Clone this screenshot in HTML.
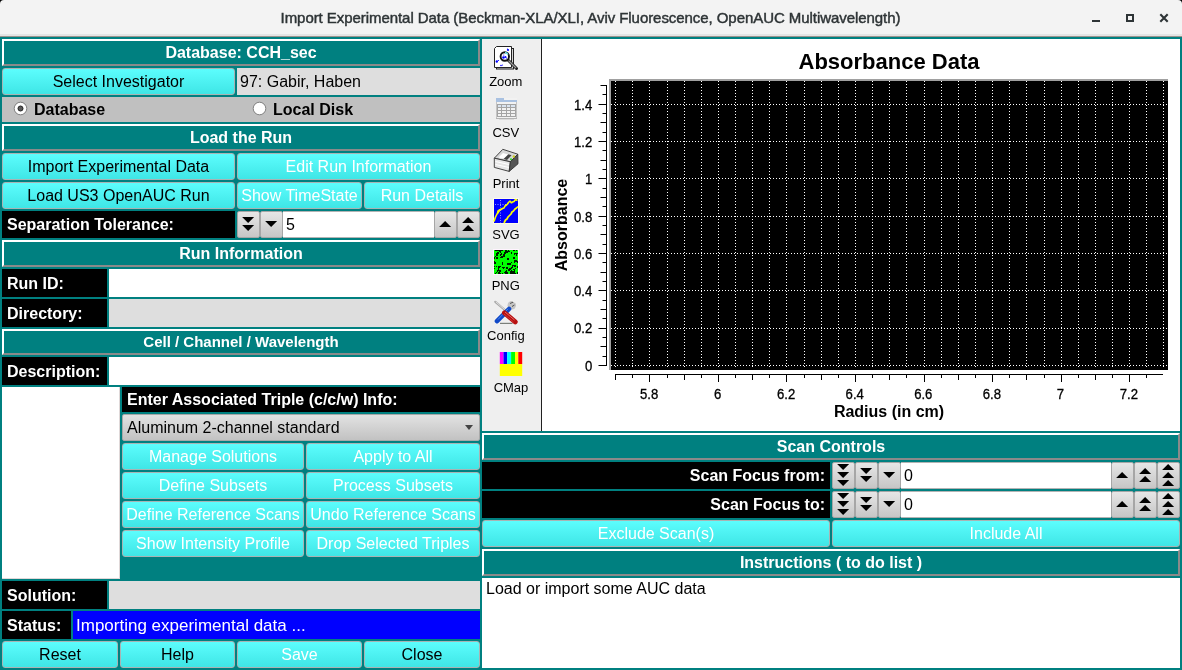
<!DOCTYPE html>
<html><head><meta charset="utf-8"><style>
html,body{margin:0;padding:0;}
svg{display:block;}
body{width:1182px;height:670px;overflow:hidden;position:relative;background:#000;font-family:"Liberation Sans",sans-serif;}
body div{position:absolute;box-sizing:border-box;}
#root{left:0;top:0;width:1182px;height:670px;will-change:transform;}
</style></head><body><div id="root">

<div style="left:0px;top:37px;width:1182px;height:633px;background:#008080;"></div>
<div style="left:0px;top:0px;width:1182px;height:37px;background:linear-gradient(#f3f3f3 0,#f3f3f3 34px,#e4e4e4 34px,#e4e4e4 36px,#9d948e 36px);border-radius:4px 4px 0 0;"></div>
<div style="left:0px;top:0px;width:1182px;height:36px;color:#2e3436;font-size:15px;line-height:35px;text-align:center;font-weight:normal;letter-spacing:-0.06px;padding-right:1px;-webkit-text-stroke:0.45px #2e3436;">Import Experimental Data (Beckman-XLA/XLI, Aviv Fluorescence, OpenAUC Multiwavelength)</div>
<div style="left:1092px;top:20px;width:8px;height:2px;background:#2e3436;"></div>
<div style="left:1126px;top:14px;width:8px;height:8px;border:2px solid #2e3436;"></div>
<div style="left:1158px;top:12px;width:12px;height:12px;"><svg width="12" height="12" viewBox="0 0 12 12" style="display:block"><path d="M2.3 2.3L9.7 9.7M9.7 2.3L2.3 9.7" stroke="#2e3436" stroke-width="2.1"/></svg></div>
<div style="left:2px;top:39px;width:478px;height:27px;background:#008080;border-top:2px solid #fff;border-left:2px solid #fff;border-bottom:2px solid #8a8a8a;border-right:2px solid #8a8a8a;color:#fff;font-weight:bold;font-size:16px;line-height:23px;text-align:center;">Database: CCH_sec</div>
<div style="left:2px;top:68px;width:233px;height:27px;background:linear-gradient(#5cfdfd,#3fe6e6);border:1px solid #a9b3b3;border-radius:3px;color:#000;font-size:16px;line-height:25px;text-align:center;white-space:nowrap;overflow:hidden;">Select Investigator</div>
<div style="left:237px;top:68px;width:243px;height:27px;background:#dedede;color:#000;font-size:16px;line-height:27px;padding-left:3px;white-space:nowrap;">97: Gabir, Haben</div>
<div style="left:2px;top:97px;width:478px;height:25px;background:#c0c0c0;"></div>
<div style="left:13.3px;top:101.3px;width:15.0px;height:15.0px;"><svg width="15" height="15" viewBox="0 0 15 15"><circle cx="7.5" cy="7.5" r="6.3" fill="#fff" stroke="#808080" stroke-width="1"/><circle cx="7.5" cy="7.5" r="2.5" fill="#5a5a5a" stroke="#222" stroke-width="1"/></svg></div>
<div style="left:252.39999999999998px;top:101.3px;width:15.0px;height:15.0px;"><svg width="15" height="15" viewBox="0 0 15 15"><circle cx="7.5" cy="7.5" r="6.3" fill="#fff" stroke="#808080" stroke-width="1"/></svg></div>
<div style="left:34px;top:97px;width:166px;height:25px;font-weight:bold;font-size:16px;line-height:25px;color:#000;">Database</div>
<div style="left:273px;top:97px;width:177px;height:25px;font-weight:bold;font-size:16px;line-height:25px;color:#000;">Local Disk</div>
<div style="left:2px;top:124px;width:478px;height:27px;background:#008080;border-top:2px solid #fff;border-left:2px solid #fff;border-bottom:2px solid #8a8a8a;border-right:2px solid #8a8a8a;color:#fff;font-weight:bold;font-size:16px;line-height:23px;text-align:center;">Load the Run</div>
<div style="left:2px;top:153px;width:233px;height:27px;background:linear-gradient(#5cfdfd,#3fe6e6);border:1px solid #a9b3b3;border-radius:3px;color:#000;font-size:16px;line-height:25px;text-align:center;white-space:nowrap;overflow:hidden;">Import Experimental Data</div>
<div style="left:237px;top:153px;width:243px;height:27px;background:linear-gradient(#5cfdfd,#3fe6e6);border:1px solid #a9b3b3;border-radius:3px;color:#fff;font-size:16px;line-height:25px;text-align:center;white-space:nowrap;overflow:hidden;">Edit Run Information</div>
<div style="left:2px;top:182px;width:233px;height:27px;background:linear-gradient(#5cfdfd,#3fe6e6);border:1px solid #a9b3b3;border-radius:3px;color:#000;font-size:16px;line-height:25px;text-align:center;white-space:nowrap;overflow:hidden;">Load US3 OpenAUC Run</div>
<div style="left:237px;top:182px;width:125px;height:27px;background:linear-gradient(#5cfdfd,#3fe6e6);border:1px solid #a9b3b3;border-radius:3px;color:#fff;font-size:16px;line-height:25px;text-align:center;white-space:nowrap;overflow:hidden;">Show TimeState</div>
<div style="left:364px;top:182px;width:116px;height:27px;background:linear-gradient(#5cfdfd,#3fe6e6);border:1px solid #a9b3b3;border-radius:3px;color:#fff;font-size:16px;line-height:25px;text-align:center;white-space:nowrap;overflow:hidden;">Run Details</div>
<div style="left:2px;top:211px;width:233px;height:27px;background:#000;color:#fff;font-weight:bold;font-size:16px;line-height:27px;white-space:nowrap;padding-left:5px;text-align:left;">Separation Tolerance:</div>
<div style="left:237px;top:211px;width:23px;height:27px;background:linear-gradient(#e6e6e6,#c6c6c6);border:1px solid #a6a6a6;border-radius:2px;"><svg width="21" height="25" style="position:absolute;left:0;top:0" viewBox="1 1 21 25"><path d="M5.1 6.0H17.1L11.1 12.0Z M5.1 14.0H17.1L11.1 20.0Z" fill="#000"/></svg></div>
<div style="left:260px;top:211px;width:23px;height:27px;background:linear-gradient(#e6e6e6,#c6c6c6);border:1px solid #a6a6a6;border-radius:2px;"><svg width="21" height="25" style="position:absolute;left:0;top:0" viewBox="1 1 21 25"><path d="M5.1 10.0H17.1L11.1 16.0Z" fill="#000"/></svg></div>
<div style="left:283px;top:211px;width:151px;height:27px;background:#fff;color:#000;font-size:16px;line-height:25px;padding-left:3px;white-space:nowrap;border-top:1px solid #b4b4b4;border-bottom:1px solid #b4b4b4;">5</div>
<div style="left:434px;top:211px;width:23px;height:27px;background:linear-gradient(#e6e6e6,#c6c6c6);border:1px solid #a6a6a6;border-radius:2px;"><svg width="21" height="25" style="position:absolute;left:0;top:0" viewBox="1 1 21 25"><path d="M5.1 16.0H17.1L11.1 10.0Z" fill="#000"/></svg></div>
<div style="left:457px;top:211px;width:23px;height:27px;background:linear-gradient(#e6e6e6,#c6c6c6);border:1px solid #a6a6a6;border-radius:2px;"><svg width="21" height="25" style="position:absolute;left:0;top:0" viewBox="1 1 21 25"><path d="M5.1 12.0H17.1L11.1 6.0Z M5.1 20.0H17.1L11.1 14.0Z" fill="#000"/></svg></div>
<div style="left:2px;top:240px;width:478px;height:27px;background:#008080;border-top:2px solid #fff;border-left:2px solid #fff;border-bottom:2px solid #8a8a8a;border-right:2px solid #8a8a8a;color:#fff;font-weight:bold;font-size:16px;line-height:23px;text-align:center;">Run Information</div>
<div style="left:2px;top:269px;width:105px;height:28px;background:#000;color:#fff;font-weight:bold;font-size:16px;line-height:27px;white-space:nowrap;padding-left:5px;text-align:left;padding-top:1px;">Run ID:</div>
<div style="left:109px;top:269px;width:371px;height:28px;background:#fff;color:#000;font-size:16px;line-height:28px;padding-left:3px;white-space:nowrap;"></div>
<div style="left:2px;top:299px;width:105px;height:28px;background:#000;color:#fff;font-weight:bold;font-size:16px;line-height:27px;white-space:nowrap;padding-left:5px;text-align:left;padding-top:1px;">Directory:</div>
<div style="left:109px;top:299px;width:371px;height:28px;background:#dedede;color:#000;font-size:16px;line-height:28px;padding-left:3px;white-space:nowrap;"></div>
<div style="left:2px;top:329px;width:478px;height:26px;background:#008080;border-top:2px solid #fff;border-left:2px solid #fff;border-bottom:2px solid #8a8a8a;border-right:2px solid #8a8a8a;color:#fff;font-weight:bold;font-size:15px;line-height:22px;text-align:center;">Cell / Channel / Wavelength</div>
<div style="left:2px;top:357px;width:105px;height:28px;background:#000;color:#fff;font-weight:bold;font-size:16px;line-height:27px;white-space:nowrap;padding-left:5px;text-align:left;padding-top:1px;">Description:</div>
<div style="left:109px;top:357px;width:371px;height:28px;background:#fff;color:#000;font-size:16px;line-height:28px;padding-left:3px;white-space:nowrap;"></div>
<div style="left:2px;top:387px;width:118px;height:192px;background:#fff;border-right:1px solid #e0d8d8;border-bottom:1px solid #e0d8d8;"></div>
<div style="left:122px;top:387px;width:358px;height:25px;background:#000;color:#fff;font-weight:bold;font-size:16px;line-height:25px;white-space:nowrap;padding-left:5px;text-align:left;">Enter Associated Triple (c/c/w) Info:</div>
<div style="left:122px;top:414px;width:358px;height:27px;background:linear-gradient(#e2e2e2,#c2c2c2);border:1px solid #a8a8a8;border-radius:2px;color:#000;font-size:16px;line-height:25px;padding-left:4px;white-space:nowrap;">Aluminum 2-channel standard<svg style="position:absolute;left:342px;top:10px" width="8" height="5" viewBox="0 0 8 5"><path d="M0 0H8L4 5Z" fill="#444"/></svg></div>
<div style="left:122px;top:443px;width:182px;height:27px;background:linear-gradient(#5cfdfd,#3fe6e6);border:1px solid #a9b3b3;border-radius:3px;color:#fff;font-size:16px;line-height:25px;text-align:center;white-space:nowrap;overflow:hidden;">Manage Solutions</div>
<div style="left:306px;top:443px;width:174px;height:27px;background:linear-gradient(#5cfdfd,#3fe6e6);border:1px solid #a9b3b3;border-radius:3px;color:#fff;font-size:16px;line-height:25px;text-align:center;white-space:nowrap;overflow:hidden;">Apply to All</div>
<div style="left:122px;top:472px;width:182px;height:27px;background:linear-gradient(#5cfdfd,#3fe6e6);border:1px solid #a9b3b3;border-radius:3px;color:#fff;font-size:16px;line-height:25px;text-align:center;white-space:nowrap;overflow:hidden;">Define Subsets</div>
<div style="left:306px;top:472px;width:174px;height:27px;background:linear-gradient(#5cfdfd,#3fe6e6);border:1px solid #a9b3b3;border-radius:3px;color:#fff;font-size:16px;line-height:25px;text-align:center;white-space:nowrap;overflow:hidden;">Process Subsets</div>
<div style="left:122px;top:501px;width:182px;height:27px;background:linear-gradient(#5cfdfd,#3fe6e6);border:1px solid #a9b3b3;border-radius:3px;color:#fff;font-size:16px;line-height:25px;text-align:center;white-space:nowrap;overflow:hidden;">Define Reference Scans</div>
<div style="left:306px;top:501px;width:174px;height:27px;background:linear-gradient(#5cfdfd,#3fe6e6);border:1px solid #a9b3b3;border-radius:3px;color:#fff;font-size:16px;line-height:25px;text-align:center;white-space:nowrap;overflow:hidden;">Undo Reference Scans</div>
<div style="left:122px;top:530px;width:182px;height:27px;background:linear-gradient(#5cfdfd,#3fe6e6);border:1px solid #a9b3b3;border-radius:3px;color:#fff;font-size:16px;line-height:25px;text-align:center;white-space:nowrap;overflow:hidden;">Show Intensity Profile</div>
<div style="left:306px;top:530px;width:174px;height:27px;background:linear-gradient(#5cfdfd,#3fe6e6);border:1px solid #a9b3b3;border-radius:3px;color:#fff;font-size:16px;line-height:25px;text-align:center;white-space:nowrap;overflow:hidden;">Drop Selected Triples</div>
<div style="left:2px;top:581px;width:105px;height:28px;background:#000;color:#fff;font-weight:bold;font-size:16px;line-height:27px;white-space:nowrap;padding-left:5px;text-align:left;padding-top:1px;">Solution:</div>
<div style="left:109px;top:581px;width:371px;height:28px;background:#dedede;color:#000;font-size:16px;line-height:28px;padding-left:3px;white-space:nowrap;"></div>
<div style="left:2px;top:611px;width:69px;height:28px;background:#000;color:#fff;font-weight:bold;font-size:16px;line-height:27px;white-space:nowrap;padding-left:5px;text-align:left;padding-top:1px;">Status:</div>
<div style="left:73px;top:611px;width:407px;height:28px;background:#0000ff;color:#fff;font-size:17px;line-height:26px;padding-left:3px;white-space:nowrap;padding-top:2px;border-top:0px solid #00f;border-bottom:0px solid #00f;">Importing experimental data ...</div>
<div style="left:2px;top:641px;width:116px;height:27px;background:linear-gradient(#5cfdfd,#3fe6e6);border:1px solid #a9b3b3;border-radius:3px;color:#000;font-size:16px;line-height:25px;text-align:center;white-space:nowrap;overflow:hidden;">Reset</div>
<div style="left:120px;top:641px;width:115px;height:27px;background:linear-gradient(#5cfdfd,#3fe6e6);border:1px solid #a9b3b3;border-radius:3px;color:#000;font-size:16px;line-height:25px;text-align:center;white-space:nowrap;overflow:hidden;">Help</div>
<div style="left:237px;top:641px;width:125px;height:27px;background:linear-gradient(#5cfdfd,#3fe6e6);border:1px solid #a9b3b3;border-radius:3px;color:#fff;font-size:16px;line-height:25px;text-align:center;white-space:nowrap;overflow:hidden;">Save</div>
<div style="left:364px;top:641px;width:116px;height:27px;background:linear-gradient(#5cfdfd,#3fe6e6);border:1px solid #a9b3b3;border-radius:3px;color:#000;font-size:16px;line-height:25px;text-align:center;white-space:nowrap;overflow:hidden;">Close</div>
<div style="left:482px;top:39px;width:60px;height:392px;background:#efefef;border-right:1px solid #202020;"></div>
<div style="left:542px;top:39px;width:638px;height:392px;background:#fff;"></div>
<div style="left:482px;top:433px;width:698px;height:27px;background:#008080;border-top:2px solid #fff;border-left:2px solid #fff;border-bottom:2px solid #8a8a8a;border-right:2px solid #8a8a8a;color:#fff;font-weight:bold;font-size:16px;line-height:23px;text-align:center;">Scan Controls</div>
<div style="left:482px;top:462px;width:348px;height:27px;background:#000;color:#fff;font-weight:bold;font-size:16px;line-height:27px;white-space:nowrap;padding-right:5px;text-align:right;">Scan Focus from:</div>
<div style="left:832px;top:462px;width:23px;height:27px;background:linear-gradient(#e6e6e6,#c6c6c6);border:1px solid #a6a6a6;border-radius:2px;"><svg width="21" height="25" style="position:absolute;left:0;top:0" viewBox="1 1 21 25"><path d="M5.1 2.0H17.1L11.1 8.0Z M5.1 10.0H17.1L11.1 16.0Z M5.1 18.0H17.1L11.1 24.0Z" fill="#000"/></svg></div>
<div style="left:855px;top:462px;width:23px;height:27px;background:linear-gradient(#e6e6e6,#c6c6c6);border:1px solid #a6a6a6;border-radius:2px;"><svg width="21" height="25" style="position:absolute;left:0;top:0" viewBox="1 1 21 25"><path d="M5.1 6.0H17.1L11.1 12.0Z M5.1 14.0H17.1L11.1 20.0Z" fill="#000"/></svg></div>
<div style="left:878px;top:462px;width:23px;height:27px;background:linear-gradient(#e6e6e6,#c6c6c6);border:1px solid #a6a6a6;border-radius:2px;"><svg width="21" height="25" style="position:absolute;left:0;top:0" viewBox="1 1 21 25"><path d="M5.1 10.0H17.1L11.1 16.0Z" fill="#000"/></svg></div>
<div style="left:901px;top:462px;width:210px;height:27px;background:#fff;color:#000;font-size:16px;line-height:25px;padding-left:3px;white-space:nowrap;border-top:1px solid #b4b4b4;border-bottom:1px solid #b4b4b4;">0</div>
<div style="left:1111px;top:462px;width:23px;height:27px;background:linear-gradient(#e6e6e6,#c6c6c6);border:1px solid #a6a6a6;border-radius:2px;"><svg width="21" height="25" style="position:absolute;left:0;top:0" viewBox="1 1 21 25"><path d="M5.1 16.0H17.1L11.1 10.0Z" fill="#000"/></svg></div>
<div style="left:1134px;top:462px;width:23px;height:27px;background:linear-gradient(#e6e6e6,#c6c6c6);border:1px solid #a6a6a6;border-radius:2px;"><svg width="21" height="25" style="position:absolute;left:0;top:0" viewBox="1 1 21 25"><path d="M5.1 12.0H17.1L11.1 6.0Z M5.1 20.0H17.1L11.1 14.0Z" fill="#000"/></svg></div>
<div style="left:1157px;top:462px;width:23px;height:27px;background:linear-gradient(#e6e6e6,#c6c6c6);border:1px solid #a6a6a6;border-radius:2px;"><svg width="21" height="25" style="position:absolute;left:0;top:0" viewBox="1 1 21 25"><path d="M5.1 8.0H17.1L11.1 2.0Z M5.1 16.0H17.1L11.1 10.0Z M5.1 24.0H17.1L11.1 18.0Z" fill="#000"/></svg></div>
<div style="left:482px;top:491px;width:348px;height:27px;background:#000;color:#fff;font-weight:bold;font-size:16px;line-height:27px;white-space:nowrap;padding-right:5px;text-align:right;">Scan Focus to:</div>
<div style="left:832px;top:491px;width:23px;height:27px;background:linear-gradient(#e6e6e6,#c6c6c6);border:1px solid #a6a6a6;border-radius:2px;"><svg width="21" height="25" style="position:absolute;left:0;top:0" viewBox="1 1 21 25"><path d="M5.1 2.0H17.1L11.1 8.0Z M5.1 10.0H17.1L11.1 16.0Z M5.1 18.0H17.1L11.1 24.0Z" fill="#000"/></svg></div>
<div style="left:855px;top:491px;width:23px;height:27px;background:linear-gradient(#e6e6e6,#c6c6c6);border:1px solid #a6a6a6;border-radius:2px;"><svg width="21" height="25" style="position:absolute;left:0;top:0" viewBox="1 1 21 25"><path d="M5.1 6.0H17.1L11.1 12.0Z M5.1 14.0H17.1L11.1 20.0Z" fill="#000"/></svg></div>
<div style="left:878px;top:491px;width:23px;height:27px;background:linear-gradient(#e6e6e6,#c6c6c6);border:1px solid #a6a6a6;border-radius:2px;"><svg width="21" height="25" style="position:absolute;left:0;top:0" viewBox="1 1 21 25"><path d="M5.1 10.0H17.1L11.1 16.0Z" fill="#000"/></svg></div>
<div style="left:901px;top:491px;width:210px;height:27px;background:#fff;color:#000;font-size:16px;line-height:25px;padding-left:3px;white-space:nowrap;border-top:1px solid #b4b4b4;border-bottom:1px solid #b4b4b4;">0</div>
<div style="left:1111px;top:491px;width:23px;height:27px;background:linear-gradient(#e6e6e6,#c6c6c6);border:1px solid #a6a6a6;border-radius:2px;"><svg width="21" height="25" style="position:absolute;left:0;top:0" viewBox="1 1 21 25"><path d="M5.1 16.0H17.1L11.1 10.0Z" fill="#000"/></svg></div>
<div style="left:1134px;top:491px;width:23px;height:27px;background:linear-gradient(#e6e6e6,#c6c6c6);border:1px solid #a6a6a6;border-radius:2px;"><svg width="21" height="25" style="position:absolute;left:0;top:0" viewBox="1 1 21 25"><path d="M5.1 12.0H17.1L11.1 6.0Z M5.1 20.0H17.1L11.1 14.0Z" fill="#000"/></svg></div>
<div style="left:1157px;top:491px;width:23px;height:27px;background:linear-gradient(#e6e6e6,#c6c6c6);border:1px solid #a6a6a6;border-radius:2px;"><svg width="21" height="25" style="position:absolute;left:0;top:0" viewBox="1 1 21 25"><path d="M5.1 8.0H17.1L11.1 2.0Z M5.1 16.0H17.1L11.1 10.0Z M5.1 24.0H17.1L11.1 18.0Z" fill="#000"/></svg></div>
<div style="left:482px;top:520px;width:348px;height:27px;background:linear-gradient(#5cfdfd,#3fe6e6);border:1px solid #a9b3b3;border-radius:3px;color:#fff;font-size:16px;line-height:25px;text-align:center;white-space:nowrap;overflow:hidden;">Exclude Scan(s)</div>
<div style="left:832px;top:520px;width:348px;height:27px;background:linear-gradient(#5cfdfd,#3fe6e6);border:1px solid #a9b3b3;border-radius:3px;color:#fff;font-size:16px;line-height:25px;text-align:center;white-space:nowrap;overflow:hidden;">Include All</div>
<div style="left:482px;top:549px;width:698px;height:27px;background:#008080;border-top:2px solid #fff;border-left:2px solid #fff;border-bottom:2px solid #8a8a8a;border-right:2px solid #8a8a8a;color:#fff;font-weight:bold;font-size:16px;line-height:23px;text-align:center;">Instructions ( to do list )</div>
<div style="left:482px;top:578px;width:698px;height:90px;background:#fff;color:#000;font-size:16px;padding:2px 4px;line-height:18px;">Load or import some AUC data</div>
<div style="left:465.8px;top:73px;width:80px;height:18px;font-size:13px;line-height:18px;text-align:center;color:#000;">Zoom</div>
<div style="left:465.8px;top:124px;width:80px;height:18px;font-size:13px;line-height:18px;text-align:center;color:#000;">CSV</div>
<div style="left:466px;top:175px;width:80px;height:18px;font-size:13px;line-height:18px;text-align:center;color:#000;">Print</div>
<div style="left:466px;top:226px;width:80px;height:18px;font-size:13px;line-height:18px;text-align:center;color:#000;">SVG</div>
<div style="left:465.8px;top:277px;width:80px;height:18px;font-size:13px;line-height:18px;text-align:center;color:#000;">PNG</div>
<div style="left:465.9px;top:327px;width:80px;height:18px;font-size:13px;line-height:18px;text-align:center;color:#000;">Config</div>
<div style="left:471px;top:379px;width:80px;height:18px;font-size:13px;line-height:18px;text-align:center;color:#000;">CMap</div>
<div style="left:482px;top:39px;width:60px;height:392px;"><svg width="60" height="392" viewBox="482 39 60 392" style="position:absolute;left:0;top:0"><rect x="496.5" y="48.5" width="17" height="20.5" fill="#d8d8d8" stroke="#222" stroke-width="1"/><path d="M494.5 48.5L496.5 46.5H511.5V67.5H494.5Z" fill="#fff" stroke="#222" stroke-width="1"/><circle cx="508" cy="50" r="1.1" fill="#0000ff"/><circle cx="507.5" cy="49" r="0.6" fill="#0000ff"/><circle cx="496.8" cy="61.5" r="1.2" fill="#0000ff"/><circle cx="498.5" cy="60.5" r="0.6" fill="#0000ff"/><circle cx="501" cy="65.5" r="0.8" fill="#0000ff"/><circle cx="502.5" cy="65" r="0.6" fill="#0000ff"/><path d="M508 60L516.5 68.5" stroke="#222" stroke-width="3" stroke-linecap="round"/><path d="M508.5 60.5L516 68" stroke="#9a9a9a" stroke-width="1.2"/><circle cx="504.8" cy="56.5" r="4.2" fill="#fff" stroke="#111" stroke-width="1.9"/><path d="M505 52.7A3.8 3.8 0 0 1 508 54.5" stroke="#7ff" stroke-width="1.2" fill="none"/><circle cx="503.5" cy="57.5" r="1.3" fill="#0000ff"/><circle cx="505.5" cy="57" r="0.9" fill="#0000ff"/><circle cx="503.8" cy="55" r="0.6" fill="#0000ff"/><circle cx="506.5" cy="58" r="0.6" fill="#0000ff"/><rect x="496" y="98" width="21" height="21" fill="#f2f2f2"/><path d="M496.5 100V118.5H516.5V102" stroke="#c4c4c4" stroke-width="1" fill="none"/><rect x="496" y="98" width="8" height="2" fill="#a9c1e1"/><rect x="496" y="100" width="21" height="2" fill="#a9c1e1"/><rect x="497" y="104" width="19" height="3" fill="#dae4f0"/><path d="M497 104.5H516M497 107.5H516M497 110.5H516M497 113.5H516M497 116.5H516M497.5 104V117M501.5 104V117M506.5 104V117M510.5 104V117M515.5 104V117" stroke="#a4a4a4" stroke-width="1" fill="none"/><rect x="496" y="118" width="21" height="1" fill="#b4b4b4"/><rect x="499" y="119" width="15" height="1" fill="#dcdcdc"/><path d="M494.3 158.2L502.8 149.3L517.8 154.2L510.4 161.8Z" fill="#d8d8d8" stroke="#333" stroke-width="0.9"/><path d="M494.3 158.2L510.4 161.8L509.2 171.4L494.3 167.4Z" fill="#e6e6e6" stroke="#333" stroke-width="0.9"/><path d="M510.4 161.8L517.8 154.2L518 163.8L509.2 171.4Z" fill="#555" stroke="#333" stroke-width="0.9"/><path d="M498.5 157.5L503 153L508 154.5L504 158.8Z" fill="#fff"/><path d="M503.5 159L508.5 154.2L511.5 155.2L507 160Z" fill="#444"/><path d="M495.5 161.5L509 164.5M495.5 164.5L509 167.5" stroke="#fff" stroke-width="1"/><circle cx="513.8" cy="156.5" r="1.2" fill="#cc2"/><circle cx="511" cy="159.3" r="1" fill="#2d2"/><rect x="493.5" y="198.5" width="25" height="25" fill="#0000ff" stroke="#fffce8" stroke-width="1"/><path d="M500.5 200V223M495 204.5H506" stroke="#d0d0ff" stroke-width="0.7" stroke-dasharray="1 1.5" fill="none"/><path d="M494 221.5L495.5 217L497 214L498.5 212L499.5 210L501 209.5L502.5 208.5L504 208L505 206L506.5 205L507.5 204L508.5 202.5L510 201L511.5 203L512.5 202L514 201.5L515.5 199.5L517.5 200.5" stroke="#ffff00" stroke-width="1.6" fill="none" stroke-linejoin="bevel"/><path d="M497.5 213L500 209.5L498 211Z" fill="#ff0" stroke="#ff0" stroke-width="1.5"/><path d="M504 223L505.5 220L507 219L508 217L509.5 215.5L511 214L512 212L513.5 211L515 209L516.5 208L518 206.5" stroke="#ffff00" stroke-width="1.7" fill="none" stroke-linejoin="bevel"/><rect x="493.5" y="249.5" width="25" height="25" fill="#00ff00" stroke="#fff4ff" stroke-width="1"/><path d="M495 250h2v1h-2zM496 250h2v1h-2zM498 250h2v1h-2zM499 250h1v2h-1zM500 250h1v2h-1zM501 250h2v1h-2zM505 250h2v2h-2zM506 250h1v1h-1zM508 250h1v1h-1zM513 250h2v1h-2zM516 250h1v1h-1zM499 251h1v1h-1zM500 251h1v2h-1zM505 251h1v1h-1zM507 251h1v2h-1zM508 251h2v1h-2zM497 252h2v2h-2zM504 252h1v2h-1zM505 252h1v2h-1zM506 252h1v1h-1zM511 252h1v2h-1zM496 253h1v1h-1zM497 253h1v1h-1zM501 253h1v2h-1zM504 253h2v1h-2zM514 253h1v2h-1zM515 253h1v1h-1zM516 253h2v1h-2zM496 254h1v2h-1zM497 254h1v2h-1zM500 254h1v2h-1zM503 254h2v2h-2zM516 254h1v2h-1zM495 256h1v1h-1zM501 256h2v2h-2zM503 256h2v1h-2zM494 257h1v2h-1zM496 257h2v2h-2zM500 257h1v1h-1zM513 257h2v2h-2zM507 258h2v2h-2zM514 260h2v2h-2zM516 260h1v2h-1zM494 261h1v1h-1zM514 261h1v2h-1zM517 261h1v2h-1zM494 262h2v2h-2zM502 262h1v2h-1zM511 262h1v1h-1zM507 263h2v2h-2zM509 263h2v2h-2zM502 264h1v1h-1zM507 264h1v1h-1zM512 265h2v1h-2zM514 265h2v2h-2zM494 266h1v1h-1zM496 266h1v1h-1zM498 266h2v2h-2zM500 266h1v1h-1zM512 266h1v2h-1zM517 266h1v2h-1zM502 267h2v1h-2zM504 267h1v1h-1zM506 267h2v2h-2zM511 267h1v1h-1zM494 268h1v1h-1zM498 268h1v2h-1zM503 268h1v1h-1zM509 268h2v2h-2zM511 268h1v1h-1zM515 268h1v1h-1zM508 269h2v2h-2zM513 269h2v1h-2zM497 270h1v2h-1zM498 270h2v1h-2zM499 270h2v2h-2zM506 270h1v2h-1zM511 270h1v2h-1zM514 270h1v2h-1zM499 271h1v2h-1zM505 271h1v2h-1zM510 271h1v2h-1zM512 271h1v1h-1zM513 271h2v1h-2zM496 272h1v1h-1zM498 272h2v2h-2zM504 272h1v1h-1zM506 272h2v1h-2zM507 272h1v2h-1zM511 272h2v1h-2zM513 272h1v2h-1zM514 272h1v2h-1zM517 272h1v2h-1zM495 273h1v1h-1zM499 273h1v1h-1zM500 273h1v1h-1zM502 273h1v1h-1zM505 273h2v1h-2zM510 273h2v1h-2zM512 273h1v1h-1zM515 273h1v1h-1z" fill="#000" fill-opacity="0.9"/><path d="M500 323.4H512.5" stroke="#7a7f7a" stroke-width="1.2"/><path d="M495.3 301.8L505.5 310.5" stroke="#a8a8a8" stroke-width="2.2" stroke-linecap="round"/><path d="M495.8 301.9L505 309.8" stroke="#e8e8e8" stroke-width="0.8"/><circle cx="511.8" cy="305.2" r="4.2" fill="#c4c4c4"/><path d="M510 303.5L513.5 302M512 306.5L514.5 305" stroke="#555" stroke-width="1"/><path d="M513 301L516 302.5" stroke="#eee" stroke-width="1.6"/><path d="M509 309L497 321.2" stroke="#1048c8" stroke-width="4.6" stroke-linecap="round"/><path d="M508 308.8L498 319.5" stroke="#4a8af0" stroke-width="1"/><path d="M504.5 312.8L515.2 321.8" stroke="#b81010" stroke-width="5" stroke-linecap="round"/><path d="M505 312L514.5 320" stroke="#f08080" stroke-width="0.8"/><path d="M504 314L513.5 322" stroke="#e05050" stroke-width="0.6"/><rect x="499.8" y="352" width="3.70" height="12" fill="#ff00ff"/><rect x="503.5" y="352" width="3.70" height="12" fill="#0000ff"/><rect x="507.2" y="352" width="3.90" height="12" fill="#00ffff"/><rect x="511.1" y="352" width="3.90" height="12" fill="#00ff00"/><rect x="515" y="352" width="3.30" height="12" fill="#ffff00"/><rect x="518.3" y="352" width="3.90" height="12" fill="#ff0000"/><rect x="499.8" y="364" width="22.4" height="12" fill="#ffff00"/></svg></div>
<div style="left:542px;top:39px;width:638px;height:392px;"><svg width="638" height="392" viewBox="542 39 638 392" style="position:absolute;left:0;top:0"><rect x="609" y="79" width="559" height="291" fill="#000"/><rect x="609" y="79" width="559" height="2" fill="#a0a0a0"/><rect x="609" y="79" width="2" height="291" fill="#a0a0a0"/><path d="M615.5 81V367M632.5 81V367M649.5 81V367M667.5 81V367M684.5 81V367M701.5 81V367M718.5 81V367M735.5 81V367M752.5 81V367M769.5 81V367M786.5 81V367M804.5 81V367M821.5 81V367M838.5 81V367M855.5 81V367M872.5 81V367M889.5 81V367M906.5 81V367M924.5 81V367M941.5 81V367M958.5 81V367M975.5 81V367M992.5 81V367M1009.5 81V367M1026.5 81V367M1044.5 81V367M1061.5 81V367M1078.5 81V367M1095.5 81V367M1112.5 81V367M1129.5 81V367M1146.5 81V367M1163.5 81V367M611 365.5H1168M611 328.5H1168M611 290.5H1168M611 253.5H1168M611 216.5H1168M611 178.5H1168M611 141.5H1168M611 104.5H1168" stroke="#fff" stroke-width="1" stroke-dasharray="1 2" fill="none"/><path d="M606.5 85V366M598.5 365.5H606.5M602.5 356.5H606.5M600.5 346.5H606.5M602.5 337.5H606.5M598.5 328.5H606.5M602.5 318.5H606.5M600.5 309.5H606.5M602.5 300.5H606.5M598.5 290.5H606.5M602.5 281.5H606.5M600.5 272.5H606.5M602.5 262.5H606.5M598.5 253.5H606.5M602.5 244.5H606.5M600.5 234.5H606.5M602.5 225.5H606.5M598.5 216.5H606.5M602.5 206.5H606.5M600.5 197.5H606.5M602.5 188.5H606.5M598.5 178.5H606.5M602.5 169.5H606.5M600.5 160.5H606.5M602.5 150.5H606.5M598.5 141.5H606.5M602.5 132.5H606.5M600.5 122.5H606.5M602.5 113.5H606.5M598.5 104.5H606.5M602.5 94.5H606.5M600.5 85.5H606.5M615 374.5H1163M615.5 374V380M632.5 374V378M649.5 374V382M667.5 374V378M684.5 374V380M701.5 374V378M718.5 374V382M735.5 374V378M752.5 374V380M769.5 374V378M786.5 374V382M804.5 374V378M821.5 374V380M838.5 374V378M855.5 374V382M872.5 374V378M889.5 374V380M906.5 374V378M924.5 374V382M941.5 374V378M958.5 374V380M975.5 374V378M992.5 374V382M1009.5 374V378M1026.5 374V380M1044.5 374V378M1061.5 374V382M1078.5 374V378M1095.5 374V380M1112.5 374V378M1129.5 374V382M1146.5 374V378" stroke="#000" stroke-width="1" fill="none"/><text transform="translate(592.3,370.80) scale(0.92,1)" text-anchor="end" font-size="14.3" fill="#000" stroke="#000" stroke-width="0.3">0</text><text transform="translate(592.3,333.49) scale(0.92,1)" text-anchor="end" font-size="14.3" fill="#000" stroke="#000" stroke-width="0.3">0.2</text><text transform="translate(592.3,296.17) scale(0.92,1)" text-anchor="end" font-size="14.3" fill="#000" stroke="#000" stroke-width="0.3">0.4</text><text transform="translate(592.3,258.86) scale(0.92,1)" text-anchor="end" font-size="14.3" fill="#000" stroke="#000" stroke-width="0.3">0.6</text><text transform="translate(592.3,221.54) scale(0.92,1)" text-anchor="end" font-size="14.3" fill="#000" stroke="#000" stroke-width="0.3">0.8</text><text transform="translate(592.3,184.23) scale(0.92,1)" text-anchor="end" font-size="14.3" fill="#000" stroke="#000" stroke-width="0.3">1</text><text transform="translate(592.3,146.92) scale(0.92,1)" text-anchor="end" font-size="14.3" fill="#000" stroke="#000" stroke-width="0.3">1.2</text><text transform="translate(592.3,109.60) scale(0.92,1)" text-anchor="end" font-size="14.3" fill="#000" stroke="#000" stroke-width="0.3">1.4</text><text transform="translate(649.10,398.7) scale(0.92,1)" text-anchor="middle" font-size="14.3" fill="#000" stroke="#000" stroke-width="0.3">5.8</text><text transform="translate(717.64,398.7) scale(0.92,1)" text-anchor="middle" font-size="14.3" fill="#000" stroke="#000" stroke-width="0.3">6</text><text transform="translate(786.19,398.7) scale(0.92,1)" text-anchor="middle" font-size="14.3" fill="#000" stroke="#000" stroke-width="0.3">6.2</text><text transform="translate(854.73,398.7) scale(0.92,1)" text-anchor="middle" font-size="14.3" fill="#000" stroke="#000" stroke-width="0.3">6.4</text><text transform="translate(923.28,398.7) scale(0.92,1)" text-anchor="middle" font-size="14.3" fill="#000" stroke="#000" stroke-width="0.3">6.6</text><text transform="translate(991.82,398.7) scale(0.92,1)" text-anchor="middle" font-size="14.3" fill="#000" stroke="#000" stroke-width="0.3">6.8</text><text transform="translate(1060.36,398.7) scale(0.92,1)" text-anchor="middle" font-size="14.3" fill="#000" stroke="#000" stroke-width="0.3">7</text><text transform="translate(1128.91,398.7) scale(0.92,1)" text-anchor="middle" font-size="14.3" fill="#000" stroke="#000" stroke-width="0.3">7.2</text><text x="889" y="69" text-anchor="middle" font-size="22" font-weight="bold" fill="#000">Absorbance Data</text><text x="889" y="417" text-anchor="middle" font-size="16" font-weight="bold" fill="#000">Radius (in cm)</text><text transform="translate(567,225) rotate(-90)" text-anchor="middle" font-size="16" font-weight="bold" fill="#000">Absorbance</text></svg></div>
</div></body></html>
